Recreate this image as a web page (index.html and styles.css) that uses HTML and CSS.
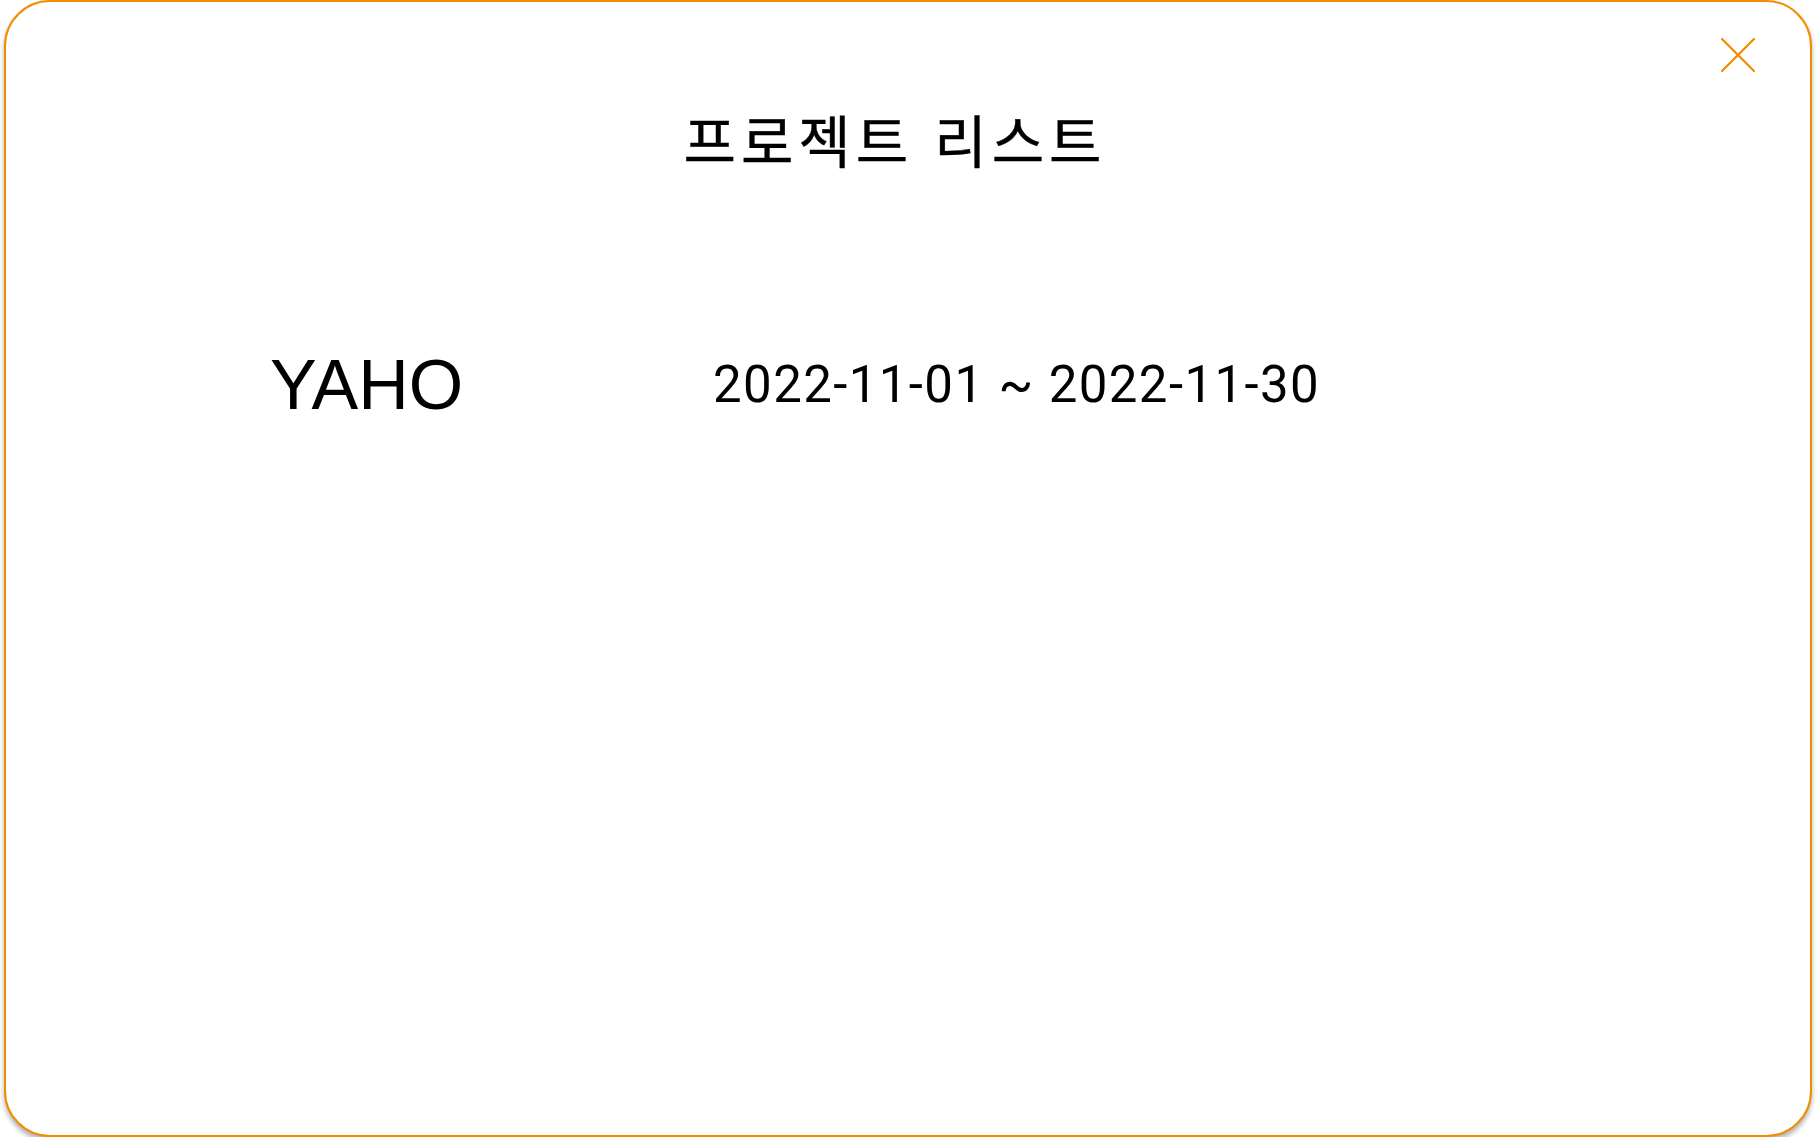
FILE: index.html
```html
<!DOCTYPE html>
<html lang="ko">
<head>
<meta charset="utf-8">
<title>프로젝트 리스트</title>
<link rel="stylesheet" href="styles.css">
</head>
<body>
<div class="modal">
  <button class="close" aria-label="닫기">
    <svg viewBox="0 0 34 34" width="34" height="34"><path d="M1 1 L33 33 M33 1 L1 33" stroke="#f08c00" stroke-width="2.2" stroke-linecap="round" fill="none"/></svg>
  </button>
  <h1 class="title">프로젝트 리스트</h1>
  <ul class="list">
    <li class="item">
      <span class="name">YAHO</span>
      <span class="period">2022-11-01 ~ 2022-11-30</span>
    </li>
  </ul>
</div>
</body>
</html>
```
FILE: styles.css
```css
html, body {
  margin: 0;
  padding: 0;
  background: #ffffff;
}
body {
  padding: 0 5px 0 4px;
  font-family: "Noto Sans CJK KR", "Noto Sans", sans-serif;
  color: #000;
}
.modal {
  position: relative;
  box-sizing: border-box;
  height: 1137px;
  border: 2px solid #f28c00;
  border-radius: 46px;
  background: #fff;
  box-shadow: 0 4px 5px rgba(0, 0, 0, 0.3);
  padding-top: 96px;
}
.close {
  position: absolute;
  top: 36px;
  right: 55px;
  width: 34px;
  height: 34px;
  padding: 0;
  border: 0;
  background: transparent;
  cursor: pointer;
}
.close svg {
  display: block;
}
.title {
  margin: 0;
  padding-right: 26px;
  text-align: center;
  font-family: "Noto Sans CJK KR", sans-serif;
  font-weight: 400;
  font-size: 57px;
  letter-spacing: 5px;
  line-height: 80px;
  -webkit-text-stroke: 0.4px #000;
}
.list {
  list-style: none;
  margin: 162px 0 0;
  padding: 0 0 0 264px;
}
.item {
  display: grid;
  grid-template-columns: 443px auto;
  align-items: center;
}
.name {
  font-family: "Liberation Sans", Arial, sans-serif;
  font-size: 70px;
  line-height: 90px;
}
.period {
  font-family: Roboto, "Liberation Sans", sans-serif;
  font-size: 51px;
  letter-spacing: 1.4px;
  line-height: 90px;
}
```
